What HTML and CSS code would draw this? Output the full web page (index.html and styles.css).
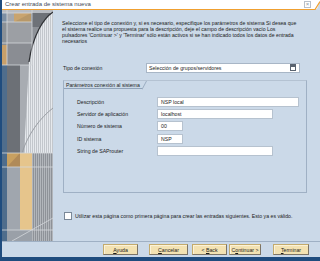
FILE: index.html
```html
<!DOCTYPE html>
<html lang="es">
<head>
    <meta charset="UTF-8">
    <title>Crear entrada de sistema nueva</title>
    <link rel="stylesheet" href="styles.css">
</head>
<body>
    <div class="window">
        <div class="titlebar">
            <span class="title">Crear entrada de sistema nueva</span>
            <span class="close">&times;</span>
            <svg class="corner" width="12" height="10" viewBox="0 0 12 10">
                <polygon points="12,1 12,10 0,10 3,9 9,9" fill="#cbd9e8"/>
                <polyline points="0,9.5 7,9.5 12,1.5" fill="none" stroke="#f0a030" stroke-width="1.2"/>
            </svg>
        </div>

        <div class="main">
            <div class="side">
                <svg width="51" height="231" viewBox="0 0 51 231">
                    <defs>
                        <pattern id="stripes" width="2" height="4" patternUnits="userSpaceOnUse">
                            <rect width="2" height="4" fill="#e6e9ed"/>
                            <rect width="1" height="4" fill="#c3c7cc"/>
                        </pattern>
                        <pattern id="darkstripes" width="2" height="4" patternUnits="userSpaceOnUse">
                            <rect width="2" height="4" fill="#8e9298"/>
                            <rect width="1" height="4" fill="#b2b6bb"/>
                        </pattern>
                    </defs>
                    <rect width="51" height="231" fill="#8e9298"/>
                    <rect width="51" height="3" fill="#b8bcc2"/>
                    <rect x="0" y="3" width="5" height="9" fill="#7d8fa3"/>
                    <rect x="5" y="3" width="7" height="9" fill="#a4a8ae"/>
                    <rect x="12" y="3" width="17" height="9" fill="#c9a46e"/>
                    <polygon points="12,12 29,3 29,12" fill="#b89868"/>
                    <rect x="30" y="3" width="21" height="14" fill="#6e7278"/>
                    <rect x="5" y="12" width="25" height="21" fill="#9c9fa4"/>
                    <rect x="5" y="33" width="25" height="22" fill="#8a8d93"/>
                    <rect x="0" y="12" width="5" height="23" fill="#8a9096"/>
                    <rect x="0" y="35" width="5" height="20" fill="#c8a06a"/>
                    <rect x="0" y="55" width="5" height="176" fill="#4f6d8c"/>
                    <rect x="5" y="55" width="13" height="88" fill="#6c7076"/>
                    <rect x="18" y="55" width="12" height="88" fill="#a8acb2"/>
                    <path d="M51,2 C42,8 31,24 27,52 L22,143 L51,143 Z" fill="url(#stripes)"/>
                    <path d="M51,2 C42,8 31,24 27,52" fill="none" stroke="#2e3034" stroke-width="1.2"/>
                    <path d="M51,98 C38,108 26,124 20,143" fill="none" stroke="#9a9ea4" stroke-width="1"/>
                    <rect x="5" y="143" width="13" height="14" fill="#c8a060"/>
                    <polygon points="5,157 18,143 18,157" fill="#b08a58"/>
                    <rect x="18" y="143" width="12" height="77" fill="#e6c58c"/>
                    <rect x="30" y="143" width="21" height="88" fill="url(#darkstripes)"/>
                    <rect x="5" y="157" width="13" height="63" fill="#a0a6ae"/>
                    <rect x="5" y="220" width="25" height="11" fill="#9aa0a8"/>
                    <g stroke="#d4d8dc" stroke-width="0.8">
                        <line x1="5" y1="0" x2="5" y2="55"/>
                        <line x1="30" y1="0" x2="30" y2="55"/>
                        <line x1="0" y1="3" x2="30" y2="3"/>
                        <line x1="0" y1="12" x2="30" y2="12"/>
                        <line x1="0" y1="33" x2="30" y2="33"/>
                        <line x1="0" y1="55" x2="30" y2="55"/>
                        <line x1="0" y1="143" x2="51" y2="143"/>
                        <line x1="0" y1="157" x2="51" y2="157"/>
                        <line x1="0" y1="220" x2="51" y2="220"/>
                        <line x1="10" y1="231" x2="51" y2="208"/>
                    </g>
                </svg>
            </div>

            <div class="content">
                <p class="intro">
                    Seleccione el tipo de conexión y, si es necesario, especifique los parámetros de sistema Si desea que<br>
                    el sistema realice una propuesta para la descripción, deje el campo de descripción vacío Los<br>
                    pulsadores 'Continuar &gt;' y 'Terminar' sólo están activos si se han indicado todos los datos de entrada<br>
                    necesarios
                </p>

                <div class="conn-row">
                    <span class="conn-label">Tipo de conexión</span>
                    <div class="select">
                        <span>Selección de grupos/servidores</span>
                        <span class="select-btn"></span>
                    </div>
                </div>

                <div class="group">
                    <div class="group-head">
                        <span class="group-title">Parámetros conexión al sistema</span>
                        <svg class="group-slant" width="5" height="9" viewBox="0 0 5 9">
                            <line x1="0" y1="8.5" x2="4.5" y2="0" stroke="#8fa2b8" stroke-width="0.8"/>
                        </svg>
                    </div>
                    <div class="fields">
                        <div class="field">
                            <span class="field-label">Descripción</span>
                            <span class="input w-long">NSP local</span>
                        </div>
                        <div class="field">
                            <span class="field-label">Servidor de aplicación</span>
                            <span class="input w-mid">localhost</span>
                        </div>
                        <div class="field">
                            <span class="field-label">Número de sistema</span>
                            <span class="input w-short">00</span>
                        </div>
                        <div class="field">
                            <span class="field-label">ID sistema</span>
                            <span class="input w-short">NSP</span>
                        </div>
                        <div class="field">
                            <span class="field-label">String de SAProuter</span>
                            <span class="input w-mid"></span>
                        </div>
                    </div>
                </div>

                <div class="check-row">
                    <span class="checkbox"></span>
                    <span>Utilizar esta página como primera página para crear las entradas siguientes. Esto ya es válido.</span>
                </div>
            </div>
        </div>

        <div class="footer">
            <button class="btn btn-help"><u>A</u>yuda</button>
            <button class="btn btn-cancel"><u>C</u>ancelar</button>
            <button class="btn btn-back">&lt; <u>B</u>ack</button>
            <button class="btn btn-next">C<u>o</u>ntinuar &gt;</button>
            <button class="btn btn-finish"><u>T</u>erminar</button>
        </div>
    </div>
</body>
</html>
```

FILE: styles.css
```css
body {
    margin: 0;
    font-family: "Liberation Sans", Arial, sans-serif;
    color: #1c1c1c;
    background-color: #cbd9e8;
}
.window {
    width: 320px;
    height: 261px;
    box-sizing: border-box;
    display: flex;
    flex-direction: column;
    border-left: 2px solid #1f4c7e;
    border-bottom: 4px solid #1f4c7e;
    background-color: #cbd9e8;
}
.titlebar {
    position: relative;
    height: 9px;
    flex-shrink: 0;
    background-color: #fff;
    border-bottom: 1px solid #f0a030;
    display: flex;
    align-items: center;
    padding-left: 3px;
}
.title {
    font-size: 6px;
    color: #3e4a58;
    line-height: 9px;
}
.close {
    position: absolute;
    left: 302px;
    top: 1px;
    width: 5px;
    height: 5px;
    border: 1px solid #b8c0ca;
    font-size: 6px;
    line-height: 5px;
    text-align: center;
    color: #8a96a4;
}
.corner {
    position: absolute;
    right: 0;
    top: 0;
}
.main {
    flex: 1;
    display: flex;
    min-height: 0;
}
.side {
    width: 51px;
    flex-shrink: 0;
    line-height: 0;
}
.content {
    flex: 1;
    padding: 11px 0 0 9px;
    font-size: 5.2px;
}
.intro {
    margin: 0;
    line-height: 5.9px;
    white-space: nowrap;
}
.conn-row {
    display: flex;
    align-items: center;
    margin-top: 18px;
    padding-left: 1px;
    height: 10px;
}
.conn-label {
    width: 83px;
}
.select {
    width: 150px;
    height: 8px;
    background-color: #fff;
    border: 1px solid #a8b6c6;
    display: flex;
    align-items: center;
    justify-content: space-between;
    padding-left: 2px;
}
.select-btn {
    width: 4px;
    height: 5px;
    margin-right: 3px;
    border: 1px solid #5a6470;
    background: linear-gradient(#5a6470 0 2px, #fff 2px);
}
.group {
    margin: 7px 0 0 1px;
    width: 244px;
    height: 113px;
    box-sizing: border-box;
    border: 1px solid #9fb0c4;
    border-top-color: #b4c2d2;
}
.group-head {
    display: flex;
    height: 8px;
}
.group-title {
    width: 76px;
    padding-left: 2px;
    line-height: 8px;
    border-bottom: 1px solid #8fa2b8;
}
.group-slant {
    display: block;
}
.fields {
    display: flex;
    flex-direction: column;
    gap: 2.3px;
    padding: 8px 0 0 13px;
}
.field {
    display: flex;
    align-items: center;
    height: 10px;
}
.field-label {
    width: 80px;
}
.input {
    height: 8px;
    box-sizing: content-box;
    background-color: #fff;
    border: 1px solid #b6c2cf;
    padding-left: 3px;
    line-height: 8px;
}
.w-long { width: 137px; }
.w-mid { width: 111px; }
.w-short { width: 21px; }
.check-row {
    display: flex;
    align-items: center;
    gap: 3px;
    margin: 19px 0 0 2px;
}
.checkbox {
    width: 6px;
    height: 6px;
    background-color: #fff;
    border: 1px solid #7a8898;
}
.footer {
    height: 15px;
    flex-shrink: 0;
    border-top: 1px solid #9fb0c4;
    display: flex;
    align-items: center;
    padding-left: 101px;
}
.btn {
    height: 11px;
    padding: 0;
    font-family: "Liberation Sans", Arial, sans-serif;
    font-size: 5.2px;
    color: #1c1c1c;
    background-color: #f3e2b2;
    border: 1px solid #c4ab6c;
    border-right-color: #7c7466;
    border-bottom-color: #7c7466;
    box-shadow: inset 1px 1px #fbf2d8;
}
.btn-help { width: 35px; }
.btn-cancel { width: 39px; margin-left: 11px; }
.btn-back { width: 35px; margin-left: 4px; }
.btn-next { width: 32px; margin-left: 2px; }
.btn-finish { width: 36px; margin-left: 12px; }
```
